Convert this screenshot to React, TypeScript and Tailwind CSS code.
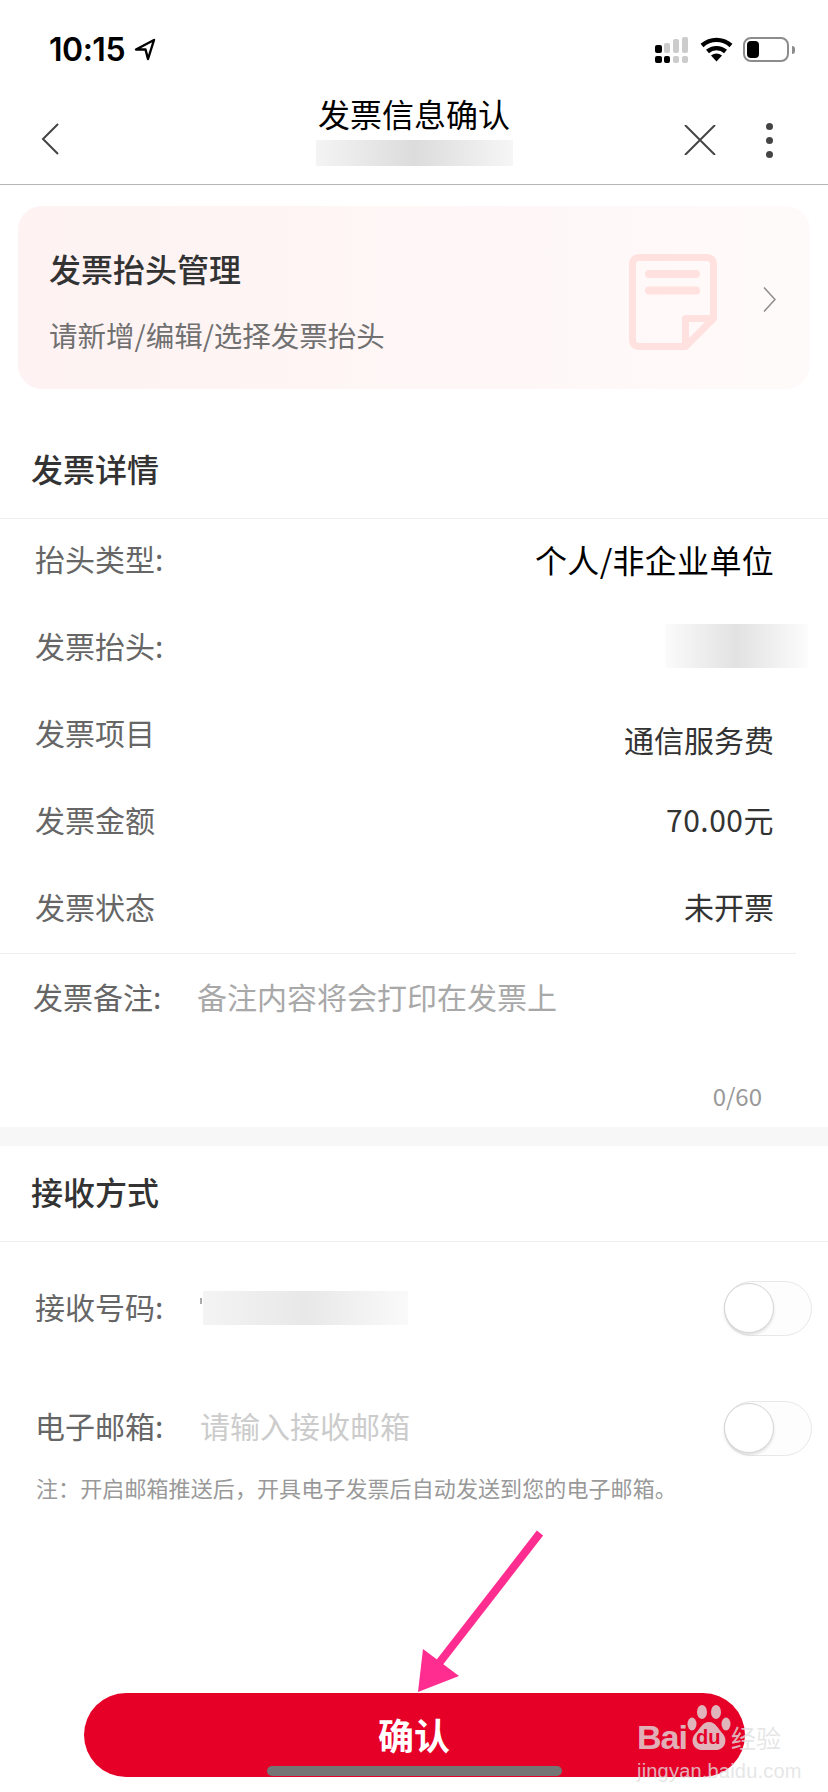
import React from 'react';

const font = { fontFamily: '"Noto Sans CJK SC", "Liberation Sans", sans-serif' };

function StatusIcons() {
  return (
    <div className="flex items-center">
      <svg width="34" height="26" viewBox="0 0 34 26">
        <rect x="0" y="8" width="7" height="8" rx="2" fill="#000" />
        <rect x="9" y="6" width="6" height="10" rx="2" fill="#ccc" />
        <rect x="18" y="2" width="6" height="14" rx="2" fill="#ccc" />
        <rect x="27" y="0" width="6" height="16" rx="2" fill="#ccc" />
        <rect x="0" y="19" width="7" height="7" rx="2" fill="#000" />
        <rect x="9" y="19" width="6" height="7" rx="2" fill="#000" />
        <rect x="18" y="19" width="6" height="7" rx="2" fill="#ccc" />
        <rect x="27" y="19" width="6" height="7" rx="2" fill="#ccc" />
      </svg>
      <svg className="ml-[11px]" width="33" height="25" viewBox="0 0 33 25">
        <path d="M2 8.5C10.5 1 22.5 1 31 8.5" fill="none" stroke="#000" strokeWidth="4.4" />
        <path d="M7.5 14.5C12.5 10 20.5 10 25.5 14.5" fill="none" stroke="#000" strokeWidth="4.4" />
        <path d="M11 18.5C14.5 15.8 18.5 15.8 22 18.5L16.5 24.5Z" fill="#000" />
      </svg>
      <div className="ml-[10px] flex h-[25px] w-[46px] items-center rounded-[8px] border-2 border-[#8c8c8c] pl-[2px]">
        <div className="h-[17px] w-[12px] rounded-[4px] bg-black" />
      </div>
      <div className="ml-[3px] h-[8px] w-[3px] rounded-r-[3px] bg-[#8c8c8c]" />
    </div>
  );
}

function DocIcon() {
  return (
    <svg className="mt-[9px]" width="88" height="96" viewBox="0 0 88 96" fill="none" stroke="#ffe1df" strokeWidth="7">
      <path d="M10 3.5H78C82 3.5 84.5 6 84.5 10V64.5L56.5 92.5H10C6 92.5 3.5 90 3.5 86V10C3.5 6 6 3.5 10 3.5Z" strokeLinejoin="round" />
      <path d="M56.5 90V64.5H84" strokeLinejoin="round" />
      <path d="M20 20H67M20 36.5H67" strokeWidth="8" strokeLinecap="round" />
    </svg>
  );
}

function Blur({ className }: { className: string }) {
  return <div className={`bg-linear-to-r from-[#f4f4f4] via-[#dcdcdc] to-[#f6f6f6] ${className}`} />;
}

function Toggle() {
  return (
    <div className="relative h-[55px] w-[88px] rounded-full border border-[#e8e8e8] bg-[#fdfdfd]">
      <div className="absolute top-[1px] left-[-1px] h-[50px] w-[50px] rounded-full border border-[#d6d6d6] bg-white shadow-[0_2px_3px_rgba(0,0,0,0.12)]" />
    </div>
  );
}

function DetailRow({ label, value }: { label: string; value: React.ReactNode }) {
  return (
    <div className="flex h-[80px] items-center justify-between pr-[54px] pl-[35px]">
      <span className="mb-[3px] text-[30px] leading-[34px] text-[#666]">{label}</span>
      {value}
    </div>
  );
}

function Paw() {
  return (
    <div className="relative">
      <svg className="block" width="44" height="46" viewBox="0 0 44 46" fill="#e0e0e0" fillOpacity="0.8">
        <ellipse cx="5" cy="19" rx="4.5" ry="6.5" />
        <ellipse cx="15" cy="7" rx="5" ry="7" />
        <ellipse cx="29" cy="7" rx="5" ry="7" />
        <ellipse cx="39" cy="19" rx="4.5" ry="6.5" />
        <path d="M22 17C15 17 13 24 8 29C3 35 6 45 15 45H29C38 45 41 35 36 29C31 24 29 17 22 17Z" />
      </svg>
      <span className="absolute top-[22px] left-[9px] text-[20px] leading-[20px] font-bold text-[#e60028]" style={{ fontFamily: '"Liberation Sans", sans-serif' }}>du</span>
    </div>
  );
}

export default function App() {
  return (
    <div className="relative flex h-[1792px] w-[828px] flex-col overflow-hidden bg-white" style={font}>
      {/* status bar */}
      <div className="flex h-[99px] items-center justify-between pr-[33px] pl-[49px]">
        <div className="flex items-center gap-[9px]">
          <span className="text-[32px] leading-none font-semibold tracking-[-0.5px] text-black" style={{ fontFamily: 'Inter, sans-serif' }}>
            10:15
          </span>
          <svg width="22" height="23" viewBox="0 0 22 23" fill="none" stroke="#000" strokeWidth="2.4" strokeLinejoin="round">
            <path d="M20 2L2 11.5H11.5L14 21Z" />
          </svg>
        </div>
        <StatusIcons />
      </div>

      {/* nav */}
      <div className="grid h-[86px] grid-cols-[1fr_auto_1fr] items-start border-b border-[#b5b5b5]">
        <svg className="mt-[24px] ml-[41px]" width="18" height="32" viewBox="0 0 18 32" fill="none" stroke="#444" strokeWidth="2">
          <path d="M17 1L2 16L17 31" />
        </svg>
        <div className="flex flex-col items-center">
          <span className="mt-[-2px] text-[32px] leading-[32px] text-black">发票信息确认</span>
          <Blur className="mt-[11px] h-[26px] w-[197px]" />
        </div>
        <div className="flex items-start justify-end pr-[55px]">
          <svg className="mt-[26px]" width="32" height="30" viewBox="0 0 32 30" fill="none" stroke="#444" strokeWidth="2">
            <path d="M1 0L31 30M31 0L1 30" />
          </svg>
          <div className="mt-[24px] ml-[50px] flex flex-col gap-[7px]">
            <div className="h-[7px] w-[7px] rounded-full bg-[#444]" />
            <div className="h-[7px] w-[7px] rounded-full bg-[#444]" />
            <div className="h-[7px] w-[7px] rounded-full bg-[#444]" />
          </div>
        </div>
      </div>

      {/* title manage card */}
      <div className="mt-[21px] ml-[18px] flex h-[183px] w-[792px] items-center rounded-[24px] bg-linear-to-r from-[#fef2f2] to-[#fffafa] pr-[34px] pl-[31px]">
        <div className="mt-[7px] flex-1">
          <div className="text-[32px] leading-[32px] font-medium text-[#333]">发票抬头管理</div>
          <div className="mt-[35px] text-[28.5px] leading-[32px] text-[#707070]">请新增/编辑/选择发票抬头</div>
        </div>
        <DocIcon />
        <svg className="mt-[4px] ml-[46px]" width="13" height="25" viewBox="0 0 13 25" fill="none" stroke="#8f8f8f" strokeWidth="1.6">
          <path d="M1 0.5L12 12.5L1 24.5" />
        </svg>
      </div>

      {/* details */}
      <div className="border-b border-[#eeeeee] pt-[63px] pb-[34px] pl-[31px] text-[32px] leading-[32px] font-medium text-[#333]">发票详情</div>
      <div className="pb-[6px]">
        <DetailRow label="抬头类型:" value={<span className="text-[32px] leading-[36px] tracking-[0.3px] text-black">个人/非企业单位</span>} />
        <div className="mt-[7px] flex h-[80px] items-center justify-between pl-[35px]">
          <span className="mb-[3px] text-[30px] leading-[34px] text-[#666]">发票抬头:</span>
          <Blur className="mr-[20px] h-[44px] w-[143px] rounded-[2px] from-[#fbfbfb] via-[#e2e2e2] to-[#fcfcfc]" />
        </div>
        <div className="mt-[7px]">
          <DetailRow label="发票项目" value={<span className="mt-3 text-[30px] leading-[34px] text-[#333]">通信服务费</span>} />
        </div>
        <div className="mt-[7px]">
          <DetailRow label="发票金额" value={<span className="mb-[3px] text-[30px] leading-[34px] tracking-[0.5px] text-[#333]">70.00元</span>} />
        </div>
        <div className="mt-[7px]">
          <DetailRow label="发票状态" value={<span className="mb-[3px] text-[30px] leading-[34px] text-[#333]">未开票</span>} />
        </div>
      </div>
      <div className="h-px w-[796px] bg-[#eeeeee]" />

      {/* remark */}
      <div className="flex h-[173px] flex-col justify-between pt-[26px] pr-[66px] pb-[19px] pl-[33px]">
        <div className="flex">
          <span className="w-[164px] text-[30px] leading-[32px] text-[#666]">发票备注:</span>
          <span className="text-[30px] leading-[32px] text-[#a8a8a8]">备注内容将会打印在发票上</span>
        </div>
        <div className="text-right text-[24px] leading-[24px] text-[#999]">0/60</div>
      </div>
      <div className="h-[19px] bg-[#f7f7f7]" />

      {/* receive */}
      <div className="border-b border-[#eeeeee] pt-[29px] pb-[34px] pl-[31px] text-[32px] leading-[32px] font-medium text-[#333]">接收方式</div>
      <div className="mt-[39px] flex h-[55px] items-center pr-[16px] pl-[35px]">
        <span className="mb-[6px] w-[165px] text-[30px] leading-[34px] text-[#666]">接收号码:</span>
        <div className="mb-[16px] h-[6px] w-[2px] bg-[#aaaaaa]" />
        <Blur className="mb-[2px] ml-[1px] h-[34px] w-[205px] from-[#f3f3f3] via-[#e8e8e8] to-[#fafafa]" />
        <div className="flex-1" />
        <Toggle />
      </div>
      <div className="mt-[65px] flex h-[55px] items-center pr-[16px] pl-[35px]">
        <span className="mb-[8px] w-[165px] text-[30px] leading-[34px] text-[#666]">电子邮箱:</span>
        <span className="mb-[8px] text-[30px] leading-[34px] text-[#cccccc]">请输入接收邮箱</span>
        <div className="flex-1" />
        <Toggle />
      </div>
      <div className="mt-[20px] pl-[36px] text-[22px] leading-[22px] tracking-[0.1px] text-[#999]">{'注\uFF1A开启邮箱推送后\uFF0C开具电子发票后自动发送到您的电子邮箱。'}</div>

      {/* confirm */}
      <div className="relative mt-auto mb-[15px] flex h-[84px] w-[661px] items-center justify-center self-center rounded-full bg-[#e60028]">
        <span className="mb-[2px] text-[36px] leading-none font-bold text-white">确认</span>
        <div className="absolute bottom-[1px] left-[183px] h-[10px] w-[295px] rounded-full bg-[#757575]" />
      </div>

      {/* annotation arrow */}
      <svg className="absolute top-[1525px] left-[410px]" width="140" height="175" viewBox="0 0 140 175">
        <path d="M130 8L26 142" stroke="#ff2d8f" strokeWidth="8" fill="none" />
        <path d="M8 167L13 124L49 151Z" fill="#ff2d8f" />
      </svg>

      {/* baidu watermark */}
      <div className="absolute top-[1705px] left-[637px] w-[150px] text-[#e0e0e0]/80">
        <div className="flex items-end">
          <span className="mb-[-5px] text-[34px] leading-[38px] font-bold tracking-[-1px]" style={{ fontFamily: '"Liberation Sans", sans-serif' }}>Bai</span>
          <Paw />
          <span className="mb-[-1px] text-[25px] leading-[30px]">经验</span>
        </div>
        <div className="mt-[10px] text-[20px] leading-[20px] tracking-[0.2px]" style={{ fontFamily: '"Liberation Sans", sans-serif' }}>jingyan.baidu.com</div>
      </div>
    </div>
  );
}
